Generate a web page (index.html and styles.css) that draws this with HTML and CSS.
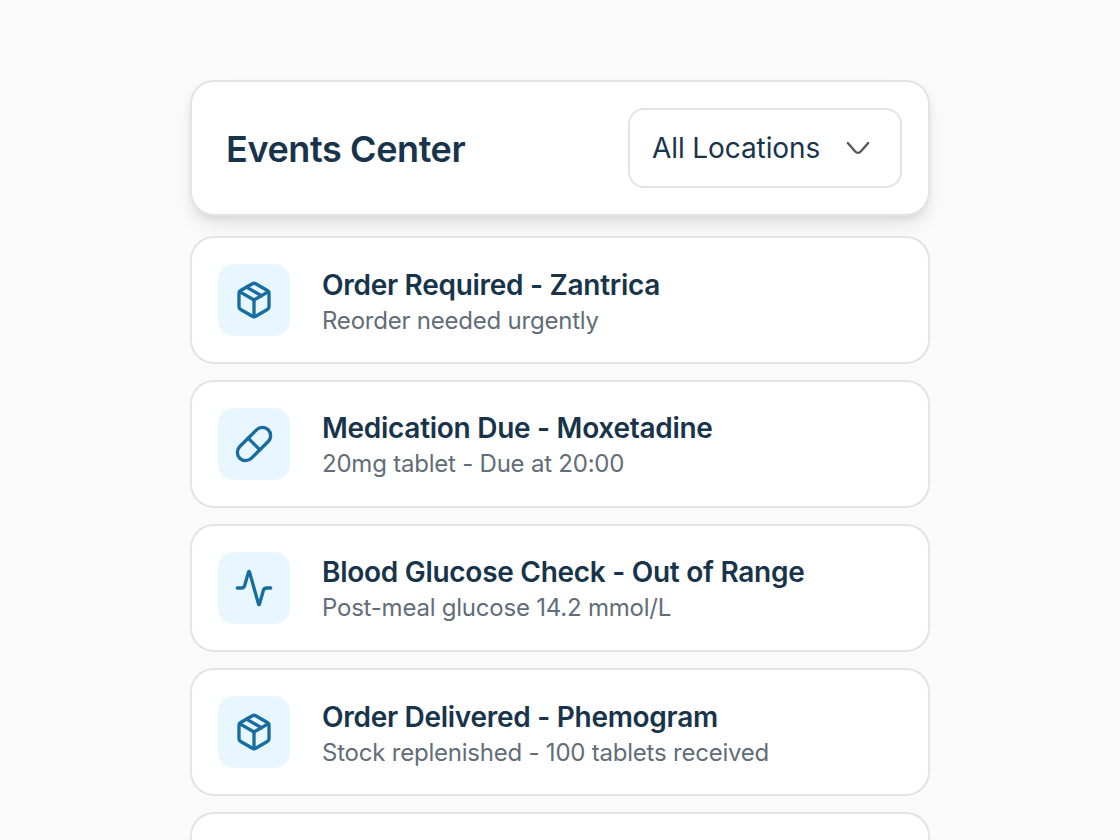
FILE: index.html
```html
<!DOCTYPE html>
<html lang="en">
<head>
<meta charset="utf-8">
<title>Events Center</title>
<link rel="stylesheet" href="styles.css">
</head>
<body>
<svg width="0" height="0" class="defs">
  <symbol id="package" viewBox="0 0 24 24"><path d="M11 21.73a2 2 0 0 0 2 0l7-4A2 2 0 0 0 21 16V8a2 2 0 0 0-1-1.73l-7-4a2 2 0 0 0-2 0l-7 4A2 2 0 0 0 3 8v8a2 2 0 0 0 1 1.73z"/><path d="M12 22V12"/><path d="m3.3 7 8.7 5 8.7-5"/><path d="m7.5 4.27 9 5.15"/></symbol>
  <symbol id="pill" viewBox="0 0 24 24"><path d="m10.5 20.5 10-10a4.95 4.95 0 1 0-7-7l-10 10a4.95 4.95 0 1 0 7 7Z"/><path d="m8.5 8.5 7 7"/></symbol>
  <symbol id="activity" viewBox="0 0 24 24"><path d="M22 12h-2.48a2 2 0 0 0-1.93 1.46l-2.35 8.36a.25.25 0 0 1-.48 0L9.24 2.18a.25.25 0 0 0-.48 0l-2.35 8.36A2 2 0 0 1 4.49 12H2"/></symbol>
</svg>
<main class="events">
  <header class="header">
    <h1 class="title">Events Center</h1>
    <button class="select" type="button"><span class="select-label">All Locations</span>
      <svg class="chevron" width="24" height="16" viewBox="0 0 24 16"><path d="M1.8 3L9 11.2Q12 14.6 15 11.2L22.2 3"/></svg>
    </button>
  </header>
  <section class="card order"><div class="tile"><svg class="icon"><use href="#package"/></svg></div><div class="text"><h2 class="name">Order Required - Zantrica</h2><p class="detail">Reorder needed urgently</p></div></section>
  <section class="card"><div class="tile"><svg class="icon"><use href="#pill"/></svg></div><div class="text"><h2 class="name">Medication Due - Moxetadine</h2><p class="detail">20mg tablet - Due at 20:00</p></div></section>
  <section class="card"><div class="tile"><svg class="icon"><use href="#activity"/></svg></div><div class="text"><h2 class="name">Blood Glucose Check - Out of Range</h2><p class="detail">Post-meal glucose 14.2 mmol/L</p></div></section>
  <section class="card order"><div class="tile"><svg class="icon"><use href="#package"/></svg></div><div class="text"><h2 class="name">Order Delivered - Phemogram</h2><p class="detail">Stock replenished - 100 tablets received</p></div></section>
  <section class="card last"></section>
</main>
</body>
</html>
```
FILE: styles.css
```css
* { box-sizing: border-box; }
body { margin: 0; height: 840px; overflow: hidden; background: #fafafa; font-family: Inter, sans-serif; color: #18344b; }
.defs { position: absolute; }
.events { width: 740px; height: 840px; margin: 0 auto; padding-top: 80px; display: flex; flex-direction: column; gap: 16px; }
.header { height: 136px; flex-shrink: 0; margin-bottom: 4px; padding: 0 26px 0 34px; display: flex; align-items: center; justify-content: space-between; background: #fff; border: 2px solid #e4e4e4; border-radius: 24px; box-shadow: 0 12px 20px -4px rgba(0,0,0,.09), 0 4px 8px -2px rgba(0,0,0,.09); }
.title { margin: 0; padding-top: 2px; font-size: 36px; line-height: 48px; font-weight: 600; letter-spacing: -0.4px; }
.select { width: 274px; height: 80px; padding: 0 30px 0 22px; display: flex; align-items: center; justify-content: space-between; background: #fff; border: 2px solid #e4e4e4; border-radius: 16px; font: 400 28px/40px Inter, sans-serif; color: inherit; }
.select-label { letter-spacing: -0.1px; }
.chevron { fill: none; stroke: #555; stroke-width: 2.3; stroke-linecap: round; stroke-linejoin: round; }
.card { height: 128px; flex-shrink: 0; padding: 0 26px; display: flex; align-items: center; gap: 32px; background: #fff; border: 2px solid #e4e4e4; border-radius: 24px; }
.card.last { height: 28px; border-bottom: 0; border-radius: 24px 24px 0 0; }
.tile { width: 72px; height: 72px; border-radius: 16px; background: #e8f6ff; display: flex; align-items: center; justify-content: center; }
.icon { width: 40px; height: 40px; fill: none; stroke: #176d9f; stroke-width: 2; stroke-linecap: round; stroke-linejoin: round; }
.text { padding-top: 4px; }
.order .text { padding-top: 6px; }
.name { margin: 0; font-size: 28px; line-height: 36px; font-weight: 600; letter-spacing: -0.28px; }
.detail { margin: 0; font-size: 24px; line-height: 36px; letter-spacing: -0.22px; color: #616d78; }
```
